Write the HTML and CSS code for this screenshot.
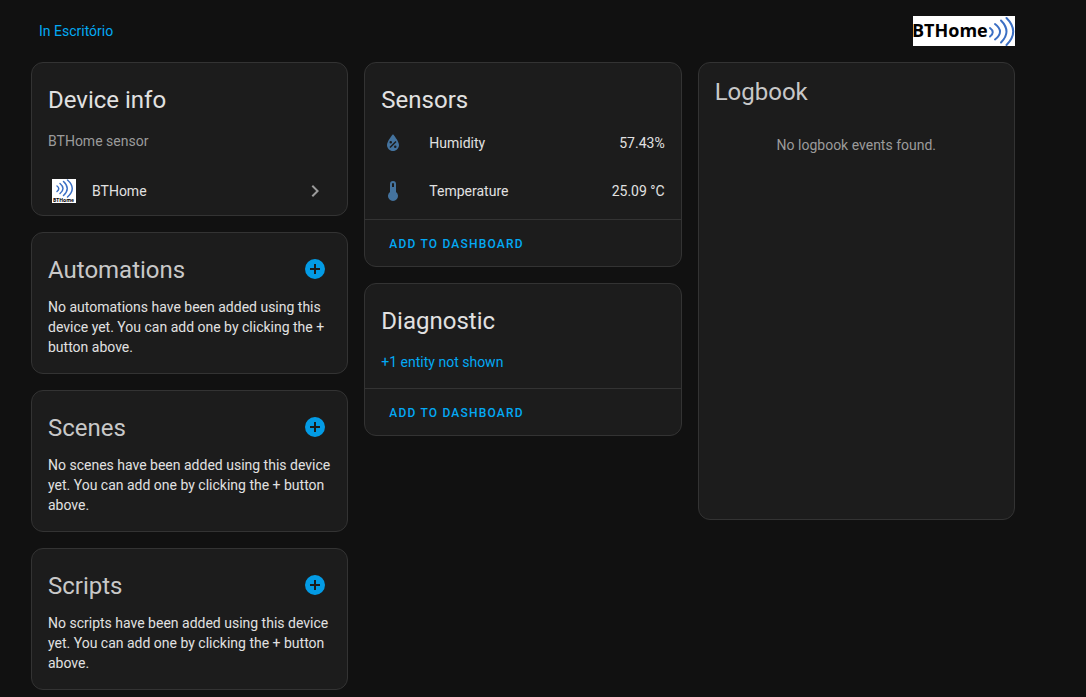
FILE: index.html
```html
<!DOCTYPE html>
<html lang="en">
<head>
<meta charset="utf-8">
<meta name="viewport" content="width=device-width, initial-scale=1">
<title>BTHome sensor</title>
<link rel="stylesheet" href="styles.css">
</head>
<body>
<svg class="defs" aria-hidden="true">
  <symbol id="plus-circle" viewBox="0 0 24 24"><path d="M17 13H13V17H11V13H7V11H11V7H13V11H17M12 2A10 10 0 0 0 2 12A10 10 0 0 0 12 22A10 10 0 0 0 22 12A10 10 0 0 0 12 2Z"/></symbol>
</svg>
<header class="header">
  <a class="link" href="#">In Escritório</a>
  <svg class="logo" viewBox="0 0 102 30" role="img" aria-label="BTHome">
    <rect width="102" height="30" fill="#fff"/>
    <text class="logo-text" x="-1" y="21">BTHome</text>
    <g class="waves">
      <path d="M77 12Q82.500 16 77 20.500"/>
      <path d="M82 8Q92 15.500 82 23.500"/>
      <path d="M88 4.500Q99 15.500 88 26.500"/>
      <path d="M93.500 2Q107 15.500 93.500 29"/>
    </g>
  </svg>
</header>
<main class="columns">
  <div class="column">
    <section class="card">
      <h1 class="title bright">Device info</h1>
      <p class="model">BTHome sensor</p>
      <a class="integration" href="#">
        <svg class="brand" viewBox="0 0 24 24" aria-hidden="true">
          <rect width="24" height="24" fill="#fff"/>
          <g class="waves small">
            <path d="M5 7Q8.500 9.500 5 12.500"/>
            <path d="M8 4.500Q14 9.500 8 14.500"/>
            <path d="M11.500 2.500Q19 9.500 11.500 16.500"/>
            <path d="M15.500 1Q25 9.500 15.500 18"/>
          </g>
          <text class="brand-text" x="1" y="23">BTHome</text>
        </svg>
        <span class="grow">BTHome</span>
        <svg class="icon chevron" viewBox="0 0 24 24" aria-hidden="true"><path d="M8.590 16.580L13.170 12L8.590 7.410L10 6L16 12L10 18L8.590 16.580Z"/></svg>
      </a>
    </section>
    <section class="card">
      <div class="heading"><h1 class="title">Automations</h1><button class="add" aria-label="Add automation"><svg class="icon"><use href="#plus-circle"/></svg></button></div>
      <p class="note">No automations have been added using this device yet. You can add one by clicking the + button above.</p>
    </section>
    <section class="card">
      <div class="heading"><h1 class="title">Scenes</h1><button class="add" aria-label="Add scene"><svg class="icon"><use href="#plus-circle"/></svg></button></div>
      <p class="note">No scenes have been added using this device yet. You can add one by clicking the + button above.</p>
    </section>
    <section class="card">
      <div class="heading"><h1 class="title">Scripts</h1><button class="add" aria-label="Add script"><svg class="icon"><use href="#plus-circle"/></svg></button></div>
      <p class="note">No scripts have been added using this device yet. You can add one by clicking the + button above.</p>
    </section>
  </div>
  <div class="column">
    <section class="card">
      <h1 class="title bright">Sensors</h1>
      <div class="entities">
        <div class="entity">
          <svg class="icon state" viewBox="0 0 24 24" aria-hidden="true"><path d="M12 3.250S6 10 6 14C6 17.320 8.690 20 12 20S18 17.320 18 14C18 10 12 3.250 12 3.250M14.470 9.970L15.530 11.030L9.530 17.030L8.470 15.970M9.750 10A1.250 1.250 0 0 1 11 11.250A1.250 1.250 0 0 1 9.750 12.500A1.250 1.250 0 0 1 8.500 11.250A1.250 1.250 0 0 1 9.750 10M14.250 14.500A1.250 1.250 0 0 1 15.500 15.750A1.250 1.250 0 0 1 14.250 17A1.250 1.250 0 0 1 13 15.750A1.250 1.250 0 0 1 14.250 14.500Z" fill-rule="evenodd"/></svg>
          <span class="grow">Humidity</span><span>57.43%</span>
        </div>
        <div class="entity">
          <svg class="icon state" viewBox="0 0 24 24" aria-hidden="true"><path d="M15 13V5A3 3 0 0 0 9 5V13A5 5 0 1 0 15 13M12 4A1 1 0 0 1 13 5V8H11V5A1 1 0 0 1 12 4Z"/></svg>
          <span class="grow">Temperature</span><span>25.09 °C</span>
        </div>
      </div>
      <div class="actions"><button class="text-button">ADD TO DASHBOARD</button></div>
    </section>
    <section class="card">
      <h1 class="title bright">Diagnostic</h1>
      <button class="show-more link">+1 entity not shown</button>
      <div class="actions"><button class="text-button">ADD TO DASHBOARD</button></div>
    </section>
  </div>
  <div class="column">
    <section class="card logbook">
      <h1 class="title compact">Logbook</h1>
      <p class="empty">No logbook events found.</p>
    </section>
  </div>
</main>
</body>
</html>
```
FILE: styles.css
```css
* { box-sizing: border-box; }
body {
  margin: 0;
  padding: 16px 71px 7px 31px;
  background: #111;
  color: #e1e1e1;
  font: 14px/20px Roboto, sans-serif;
}
h1, p { margin: 0; }
button { border: 0; padding: 0; background: none; font: inherit; cursor: pointer; }
.defs { display: none; }
.header { display: flex; justify-content: space-between; align-items: center; padding-left: 8px; }
.link { color: #03a9f4; text-decoration: none; }
.logo { width: 102px; height: 30px; overflow: visible; }
.logo-text { font: 700 18px "Open Sans", "Noto Sans", sans-serif; fill: #000; }
.waves { fill: none; stroke: #3b6fc4; stroke-width: 2; stroke-linecap: round; }
.waves.small { stroke-width: 1.5; }
.columns { display: grid; grid-template-columns: repeat(3, minmax(0, 1fr)); gap: 16px; margin-top: 16px; }
.column { display: flex; flex-direction: column; gap: 16px; }
.card { border: 1px solid #333; border-radius: 12px; background: #1c1c1c; }
.title { padding: 12px 16px 6px; color: #c8c8c8; font-size: 24px; font-weight: 400; line-height: 50px; }
.title.bright { color: #e1e1e1; }
.title.compact { padding: 4px 16px 0; }
.model { padding: 0 16px; }
.model, .empty, .chevron { color: #9b9b9b; }
.integration { display: flex; align-items: center; gap: 16px; padding: 28px 20px 12px; color: inherit; text-decoration: none; }
.brand { width: 24px; height: 24px; overflow: visible; }
.brand-text { font: 700 5px "Open Sans", sans-serif; fill: #000; }
.grow { flex: 1; }
.icon { display: block; width: 24px; height: 24px; fill: currentColor; }
.heading { display: flex; justify-content: space-between; align-items: center; padding-right: 20px; }
.heading .title { padding-bottom: 2px; }
.add { color: #039be5; margin-top: 8px; }
.note { padding: 0 16px 16px; }
.entities { display: flex; flex-direction: column; gap: 8px; padding: 0 16px 8px; margin-top: -8px; }
.entity { display: flex; align-items: center; height: 40px; }
.state { color: #44739e; margin-right: 24px; }
.actions { border-top: 1px solid #333; padding: 6px 8px 4px; }
.text-button { display: block; height: 36px; padding: 0 16px; color: #03a9f4; font-size: 12px; font-weight: 500; letter-spacing: 0.1em; }
.show-more { display: block; padding: 0 16px 16px; }
.logbook { min-height: 458px; }
.empty { padding: 18px 16px; text-align: center; }
```
